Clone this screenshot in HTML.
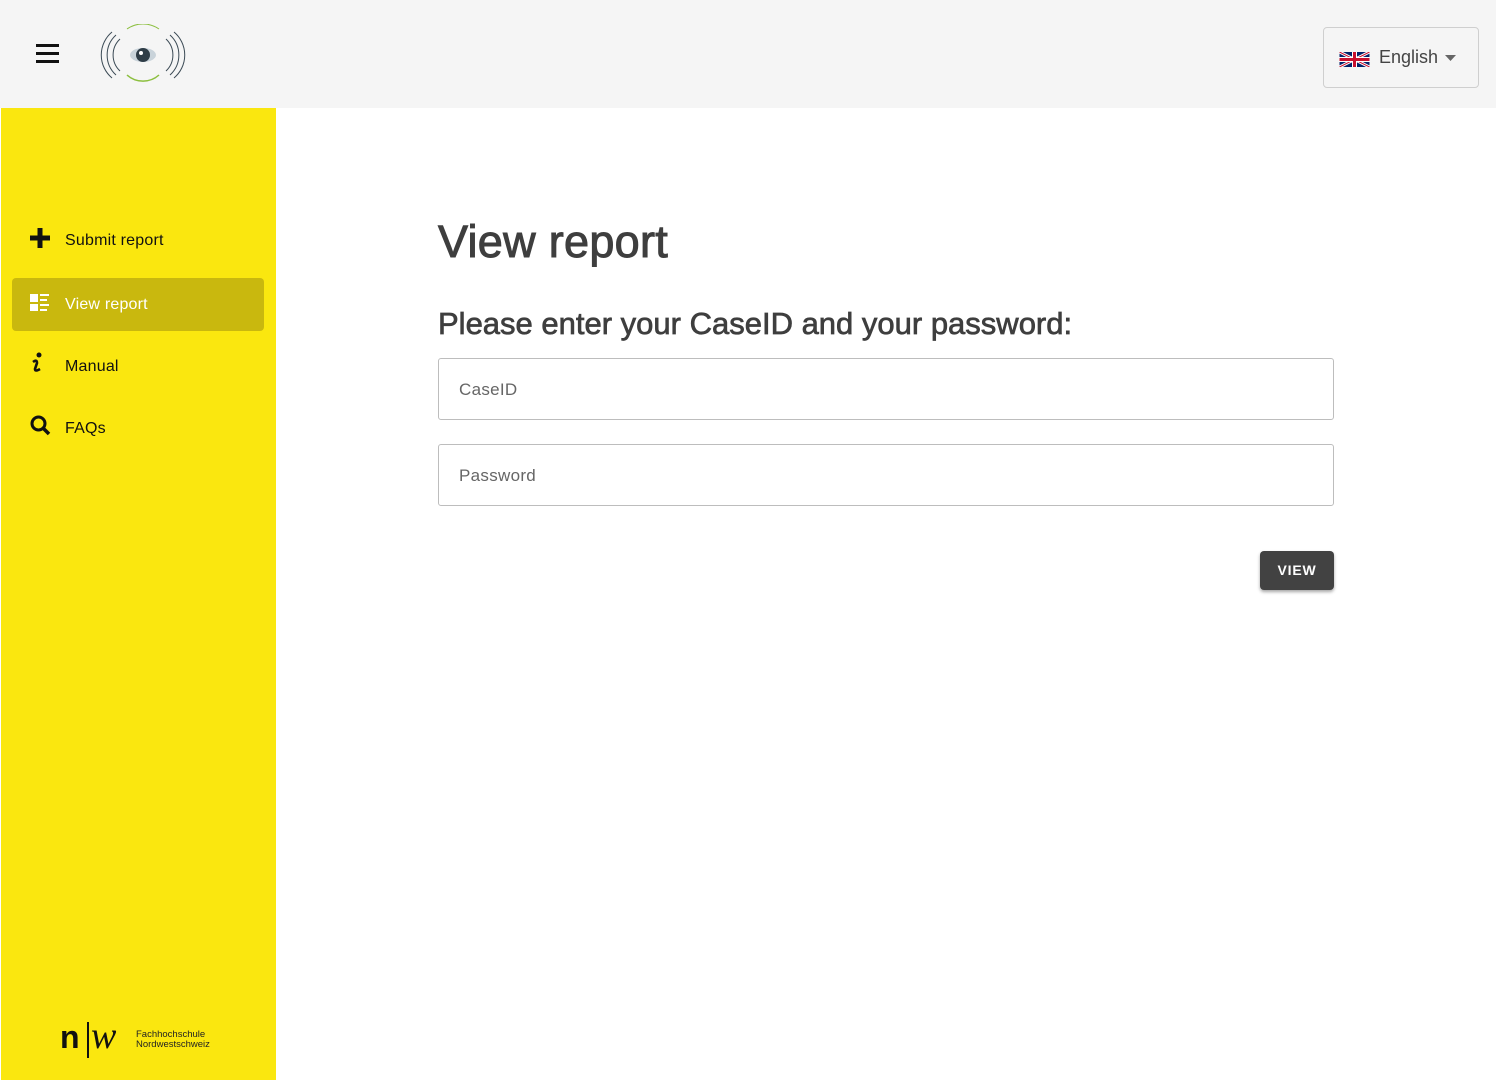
<!DOCTYPE html>
<html><head><meta charset="utf-8"><style>
*{box-sizing:border-box;margin:0;padding:0}
body{width:1496px;height:1080px;background:#fff;font-family:"Liberation Sans",sans-serif;position:relative;overflow:hidden}
.top{position:absolute;left:0;top:0;width:1496px;height:108px;background:#f5f5f5}
.side{position:absolute;left:1px;top:108px;width:275px;height:972px;background:#fae70f}
.item{position:absolute;left:11px;width:252px;height:53px;border-radius:4px;font-size:16px;color:#111}
.item span{position:absolute;left:53px;top:18px;letter-spacing:0.2px}
.item svg{position:absolute;left:18px;top:16px}
.active{background:#c9b80e;color:#fff}
h1{position:absolute;left:438px;top:216px;font-size:45px;font-weight:normal;color:#3e3e3e;-webkit-text-stroke:1px #3e3e3e;letter-spacing:0.3px}
h2{position:absolute;left:438px;top:306px;font-size:31px;font-weight:normal;color:#3e3e3e;-webkit-text-stroke:0.7px #3e3e3e;letter-spacing:0}
.inp{position:absolute;left:438px;width:896px;height:62px;border:1px solid #bdbdbd;border-radius:3px;font-size:17px;color:#666;padding:21px 20px;letter-spacing:0.3px}
.btn{position:absolute;left:1260px;top:551px;width:74px;height:39px;background:#424242;border-radius:4px;color:#fff;font-size:14px;font-weight:bold;text-align:center;line-height:39px;letter-spacing:0.8px;box-shadow:0 2px 3px rgba(0,0,0,.35)}
.lang{position:absolute;left:1323px;top:27px;width:156px;height:61px;border:1px solid #cfcfcf;border-radius:4px;background:#f5f5f5}
</style></head><body>
<div class="top">
<svg style="position:absolute;left:36px;top:44px" width="24" height="20"><rect y="0" width="23" height="3" fill="#111"/><rect y="8" width="23" height="3" fill="#111"/><rect y="16" width="23" height="3" fill="#111"/></svg>
<svg style="position:absolute;left:100px;top:24px" width="86" height="62" viewBox="0 0 86 62">
<g fill="none" stroke="#3b4a55" stroke-width="1">
<path d="M12 8 A30 30 0 0 0 12 54"/><path d="M16 11 A27 27 0 0 0 16 51"/><path d="M20 15 A22 22 0 0 0 20 47"/>
<path d="M74 8 A30 30 0 0 1 74 54"/><path d="M70 11 A27 27 0 0 1 70 51"/><path d="M66 15 A22 22 0 0 1 66 47"/>
</g>
<path d="M27 5 A28 28 0 0 1 59 5" stroke="#8cbf3f" fill="none"/>
<path d="M27 51 A24 24 0 0 0 59 51" stroke="#8cbf3f" fill="none" stroke-width="1.5"/>
<ellipse cx="43" cy="31" rx="13" ry="7" fill="#c9d3da"/>
<circle cx="43" cy="31" r="7" fill="#2f3d47"/><circle cx="41" cy="29" r="2" fill="#fff"/>
</svg>
<div class="lang">
<svg style="position:absolute;left:15px;top:24px" width="31" height="15" viewBox="0 0 60 30"><rect width="60" height="30" fill="#012169"/><path d="M0 0L60 30M60 0L0 30" stroke="#fff" stroke-width="6"/><path d="M0 0L60 30M60 0L0 30" stroke="#C8102E" stroke-width="2"/><path d="M30 0V30M0 15H60" stroke="#fff" stroke-width="10"/><path d="M30 0V30M0 15H60" stroke="#C8102E" stroke-width="6"/></svg>
<span style="position:absolute;left:55px;top:19px;font-size:18px;color:#444">English</span>
<svg style="position:absolute;left:121px;top:27px" width="11" height="6"><path d="M0 0H11L5.5 6Z" fill="#666"/></svg>
</div>
</div>
<div class="side">
<div class="item" style="top:106px"><svg width="20" height="20" style="top:14px"><rect x="7.5" y="0" width="5" height="20" fill="#111"/><rect x="0" y="7.5" width="20" height="5" fill="#111"/></svg><span>Submit report</span></div>
<div class="item active" style="top:170px"><svg width="20" height="18"><rect x="0" y="0" width="8" height="8" fill="#fff"/><rect x="0" y="10" width="8" height="7" fill="#fff"/><rect x="10" y="0" width="9" height="2" fill="#fff"/><rect x="10" y="5" width="7" height="2" fill="#fff"/><rect x="10" y="10" width="9" height="2" fill="#fff"/><rect x="10" y="15" width="7" height="2" fill="#fff"/></svg><span>View report</span></div>
<div class="item" style="top:232px"><svg width="16" height="22" style="top:12px"><circle cx="9" cy="3" r="2.5" fill="#111"/><path d="M3 10 Q7 7 7 11 L5 17 Q5 20 10 17" stroke="#111" stroke-width="2.6" fill="none"/></svg><span>Manual</span></div>
<div class="item" style="top:294px"><svg width="22" height="22" style="top:13px"><circle cx="8.5" cy="8.5" r="6.5" stroke="#111" stroke-width="3" fill="none"/><path d="M13 13L19 19" stroke="#111" stroke-width="3.5"/></svg><span>FAQs</span></div>
<div style="position:absolute;left:59px;top:911px;font-size:32px;font-weight:bold;color:#111">n</div>
<div style="position:absolute;left:86px;top:914px;width:1.5px;height:36px;background:#111"></div>
<div style="position:absolute;left:90px;top:906px;font-family:'Liberation Serif',serif;font-style:italic;font-size:38px;color:#111">w</div>
<div style="position:absolute;left:135px;top:922px;font-size:9.5px;line-height:10px;color:#222">Fachhochschule<br>Nordwestschweiz</div>
</div>
<h1>View report</h1>
<h2>Please enter your CaseID and your password:</h2>
<div class="inp" style="top:358px">CaseID</div>
<div class="inp" style="top:444px">Password</div>
<div class="btn">VIEW</div>
</body></html>
